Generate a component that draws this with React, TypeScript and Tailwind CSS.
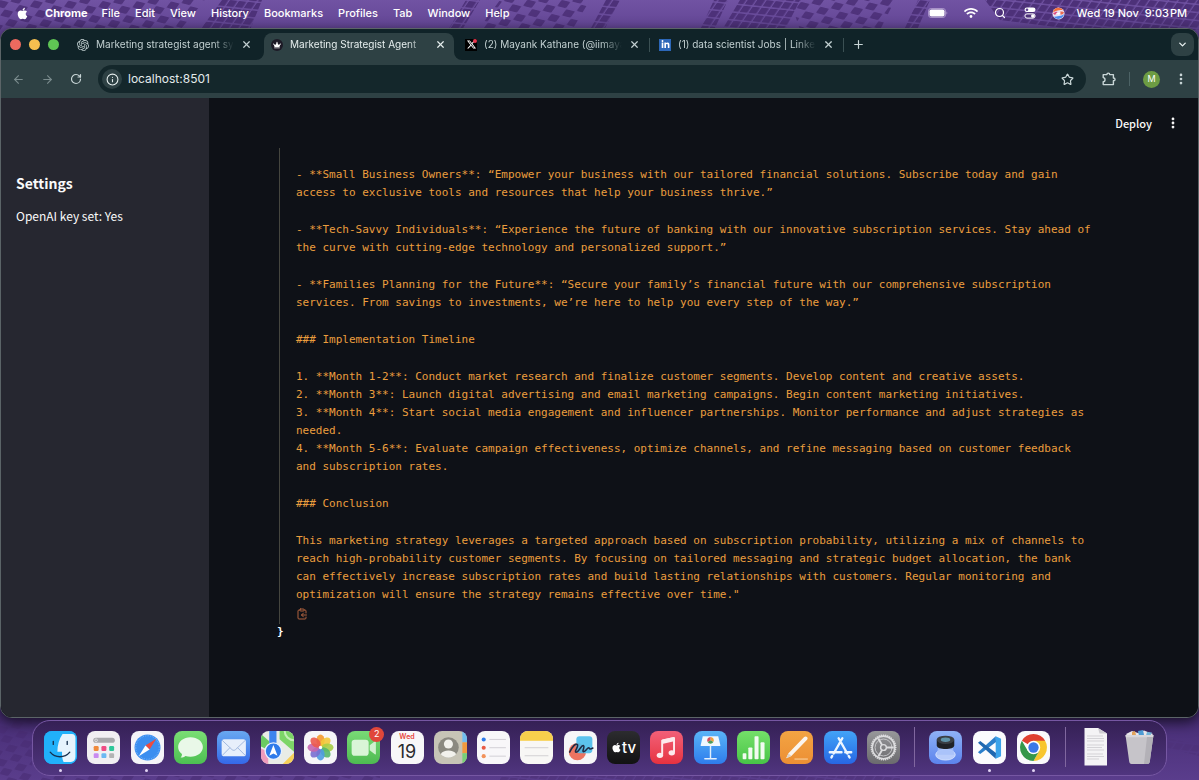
import type { ReactNode } from 'react';
import { FaApple, FaLinkedinIn, FaWifi, FaCrown } from 'react-icons/fa';
import { RiTwitterXFill } from 'react-icons/ri';
import { SiOpenai } from 'react-icons/si';
import {
  ArrowLeft,
  ArrowRight,
  ChevronDown,
  ClipboardCopy,
  EllipsisVertical,
  Info,
  Plus,
  RotateCw,
  Search,
  Star,
  X,
} from 'lucide-react';

const MENUS = ['File', 'Edit', 'View', 'History', 'Bookmarks', 'Profiles', 'Tab', 'Window', 'Help'];

const REPORT: string[][] = [
  [
    '- **Small Business Owners**: “Empower your business with our tailored financial solutions. Subscribe today and gain access to exclusive tools and resources that help your business thrive.”',
  ],
  [
    '- **Tech-Savvy Individuals**: “Experience the future of banking with our innovative subscription services. Stay ahead of the curve with cutting-edge technology and personalized support.”',
  ],
  [
    '- **Families Planning for the Future**: “Secure your family’s financial future with our comprehensive subscription services. From savings to investments, we’re here to help you every step of the way.”',
  ],
  ['### Implementation Timeline'],
  [
    '1. **Month 1-2**: Conduct market research and finalize customer segments. Develop content and creative assets.',
    '2. **Month 3**: Launch digital advertising and email marketing campaigns. Begin content marketing initiatives.',
    '3. **Month 4**: Start social media engagement and influencer partnerships. Monitor performance and adjust strategies as needed.',
    '4. **Month 5-6**: Evaluate campaign effectiveness, optimize channels, and refine messaging based on customer feedback and subscription rates.',
  ],
  ['### Conclusion'],
  [
    'This marketing strategy leverages a targeted approach based on subscription probability, utilizing a mix of channels to reach high-probability customer segments. By focusing on tailored messaging and strategic budget allocation, the bank can effectively increase subscription rates and build lasting relationships with customers. Regular monitoring and optimization will ensure the strategy remains effective over time."',
  ],
];

function Wallpaper() {
  return (
    <svg aria-hidden="true" className="absolute inset-0 h-full w-full" viewBox="0 0 1199 780" preserveAspectRatio="none">
      <defs>
        <linearGradient id="wall" x1="0" y1="0" x2="0" y2="1">
          <stop offset="0" stopColor="#7153a3" />
          <stop offset="0.04" stopColor="#614493" />
          <stop offset="0.9" stopColor="#432a70" />
          <stop offset="1" stopColor="#5a3d8c" />
        </linearGradient>
        <pattern id="chkA" width="20" height="16" patternUnits="userSpaceOnUse" patternTransform="rotate(14) skewX(-22)">
          <rect x="0" y="0" width="9" height="7" rx="1" fill="#482c73" />
          <rect x="10" y="8" width="9" height="7" rx="1" fill="#482c73" />
        </pattern>
        <pattern id="chkB" width="9" height="8" patternUnits="userSpaceOnUse" patternTransform="rotate(6) skewX(-28)">
          <rect width="7.6" height="6.6" rx="0.6" fill="#4d3179" />
        </pattern>
      </defs>
      <rect width="1199" height="780" fill="url(#wall)" />
      <path d="M0 0H205L180 30H0Z M500 0H590L572 30H478Z M790 0H895L880 30H800Z" fill="url(#chkA)" opacity="0.8" />
      <path d="M222 0H262L250 30H200Z M466 0H480L462 30H448Z M606 0H620L604 30H590Z M714 0H728L714 30H700Z M740 0H800L785 30H722Z M918 0H930L917 30H904Z M985 0H1199V30H1080L1000 20Z" fill="url(#chkB)" />
      <path d="M0 718H32V780H0Z M32 776H380V780H32Z" fill="url(#chkA)" opacity="0.6" />
      <path d="M1168 738L1199 745V756L1168 748Z M500 776H900V780H500Z" fill="url(#chkB)" opacity="0.7" />
    </svg>
  );
}

function MenuBar() {
  return (
    <header className="relative flex h-7 shrink-0 items-center pr-3 pb-0.5 pl-4 text-[11px] font-medium text-white">
      <button aria-label="Apple menu" className="mr-4">
        <FaApple size={13} />
      </button>
      <button className="mr-3.5 font-bold">Chrome</button>
      <nav className="flex items-center gap-[15px]">
        {MENUS.map((m) => (
          <button key={m}>{m}</button>
        ))}
      </nav>
      <div className="ml-auto flex items-center gap-4">
        <svg width="20" height="10" viewBox="0 0 20 10" role="img" aria-label="Battery">
          <rect x="0.5" y="0.5" width="17" height="9" rx="2.6" fill="none" stroke="#a892c8" />
          <rect x="1.5" y="1.5" width="15" height="7" rx="1.8" fill="#fff" />
          <path d="M18.6 3.4c.8.3.8 2.9 0 3.2z" fill="#c9bbdd" />
        </svg>
        <FaWifi size={14} />
        <Search size={12} strokeWidth={2.4} />
        <svg width="12" height="12" viewBox="0 0 12 12" role="img" aria-label="Control Centre" className="ml-0.5">
          <rect x="0.5" y="0.5" width="11" height="4.6" rx="2.3" fill="#fff" />
          <circle cx="3" cy="2.8" r="1.3" fill="#5f438f" />
          <rect x="0.9" y="6.9" width="10.2" height="4.2" rx="2.1" fill="none" stroke="#fff" />
          <circle cx="8.8" cy="9" r="1.8" fill="#fff" />
        </svg>
        <svg width="13" height="13" viewBox="0 0 13 13" role="img" aria-label="Siri">
          <circle cx="6.5" cy="6.5" r="6" fill="#ece3f2" />
          <path d="M1 5.5A5.7 5.7 0 0 1 11.5 3.4C8 2.6 4 3.6 1 5.5Z" fill="#f2703c" />
          <path d="M1 6.5C3 5 4.5 4.6 5.5 5L3 8Z" fill="#dc4d83" />
          <path d="M8 4.8C10 4.4 11.4 4.6 12 5.5C11.4 7 10 7.6 8.6 7.8Z" fill="#ea6a50" />
          <path d="M2 9.8C5 9 9 9.5 12 7.2A6 6 0 0 1 2.4 10.6Z" fill="#4c8bee" />
          <path d="M4 6.3L9 5.6L6.5 7.7Z" fill="#fff" />
        </svg>
        <time className="-ml-1 whitespace-pre">Wed 19 Nov  9:03{'\u200A'}PM</time>
      </div>
    </header>
  );
}

function Tab({ icon, title, active, divider }: { icon: ReactNode; title: string; active?: boolean; divider?: boolean }) {
  return (
    <div
      className={
        active
          ? 'relative flex h-full min-w-0 flex-1 items-center gap-[7px] rounded-t-lg bg-[#2e4144] pr-2 pb-1 pl-[7px] text-[#e6eeee]'
          : 'relative flex h-full min-w-0 flex-1 items-center gap-[7px] pr-2 pb-1 pl-[7px] text-[#c2d0d1]'
      }
    >
      <span className="flex size-3 shrink-0 items-center justify-center">{icon}</span>
      <button
        role="tab"
        aria-selected={!!active}
        className="min-w-0 flex-1 overflow-hidden mask-r-from-85% text-left text-[10px] whitespace-nowrap"
      >
        {title}
      </button>
      <button aria-label="Close tab" className="shrink-0">
        <X size={11} strokeWidth={2.6} />
      </button>
      {divider && <span className="absolute -right-0.5 h-3.5 w-px bg-[#3b5053]" />}
      {active && (
        <>
          <svg className="absolute bottom-0 -left-2" width="8" height="8" aria-hidden="true">
            <path d="M8 0V8H0A8 8 0 0 0 8 0Z" fill="#2e4144" />
          </svg>
          <svg className="absolute -right-2 bottom-0" width="8" height="8" aria-hidden="true">
            <path d="M0 0V8H8A8 8 0 0 1 0 0Z" fill="#2e4144" />
          </svg>
        </>
      )}
    </div>
  );
}

function TabStrip() {
  return (
    <div className="flex h-[31px] shrink-0 items-center bg-[#102328] pr-1 pl-[9px]">
      <div className="flex w-[60px] shrink-0 gap-2">
        <button aria-label="Close window" className="size-[11px] rounded-full bg-[#ee6a5f]" />
        <button aria-label="Minimise window" className="size-[11px] rounded-full bg-[#f5bf4f]" />
        <button aria-label="Zoom window" className="size-[11px] rounded-full bg-[#5fc454]" />
      </div>
      <div role="tablist" className="flex h-full max-w-[772px] min-w-0 flex-1 items-center gap-1 pt-1">
        <Tab icon={<SiOpenai size={12} />} title="Marketing strategist agent sy" />
        <Tab
          active
          icon={
            <span className="flex size-3 items-center justify-center rounded-full bg-[#1d1a26] text-white">
              <FaCrown size={8} />
            </span>
          }
          title="Marketing Strategist Agent"
        />
        <Tab
          divider
          icon={
            <span className="relative flex size-3 items-center justify-center bg-black text-white">
              <RiTwitterXFill size={11} />
              <span className="absolute top-0 right-0 size-1 rounded-full bg-[#e5344c]" />
            </span>
          }
          title="(2) Mayank Kathane (@iimaya"
        />
        <Tab
          divider
          icon={
            <span className="flex size-3 items-center justify-center bg-[#2c67b8] text-white">
              <FaLinkedinIn size={9} />
            </span>
          }
          title="(1) data scientist Jobs | Linke"
        />
      </div>
      <button aria-label="New tab" className="ml-2.5 text-[#c9d6d7]">
        <Plus size={13} strokeWidth={2.2} />
      </button>
      <button
        aria-label="Search tabs"
        className="ml-auto flex size-[23px] items-center justify-center rounded-lg bg-[#2e4144] text-[#e6eeee]"
      >
        <ChevronDown size={11} strokeWidth={3} />
      </button>
    </div>
  );
}

function Toolbar() {
  return (
    <div className="flex h-[38px] shrink-0 items-center bg-[#2e4144] pr-2.5 pl-[11px] text-[#c9d6d7]">
      <div className="flex w-[86px] shrink-0 items-center gap-4">
        <button aria-label="Back" className="text-[#7a8b8d]">
          <ArrowLeft size={13} strokeWidth={2} />
        </button>
        <button aria-label="Forward" className="text-[#7a8b8d]">
          <ArrowRight size={13} strokeWidth={2} />
        </button>
        <button aria-label="Reload">
          <RotateCw size={12} strokeWidth={2.4} />
        </button>
      </div>
      <div className="flex h-7 min-w-0 flex-1 items-center rounded-full bg-[#14272b] pr-3 pl-1">
        <button
          aria-label="View site information"
          className="flex size-5 shrink-0 items-center justify-center rounded-full bg-[#2e4144] text-[#e6eeee]"
        >
          <Info size={13} strokeWidth={2} />
        </button>
        <input
          aria-label="Address and search bar"
          defaultValue="localhost:8501"
          className="ml-1.5 min-w-0 flex-1 bg-transparent text-[12px] text-[#e3ebeb] outline-none"
        />
        <button aria-label="Bookmark this tab">
          <Star size={13} strokeWidth={2.2} />
        </button>
      </div>
      <button aria-label="Extensions" className="ml-4">
        <svg width="14" height="14" viewBox="0 0 14 14" fill="none" stroke="currentColor" strokeWidth="1.4" strokeLinejoin="round">
          <path d="M1.2 2.6H4.9C4.9 0.6 7.7 0.6 7.7 2.6H11.4V6C13.6 6 13.6 8.8 11.4 8.8V12.6H1.2V9.7C3.6 9.7 3.6 5.6 1.2 5.6Z" />
        </svg>
      </button>
      <span className="mx-[13px] h-3.5 w-px bg-[#4c6265]" />
      <button
        aria-label="Profile M"
        className="flex size-[17px] items-center justify-center rounded-full bg-[#6d9c43] text-[9px] text-white"
      >
        M
      </button>
      <button aria-label="Chrome menu" className="ml-3.5">
        <EllipsisVertical size={14} strokeWidth={2.6} />
      </button>
    </div>
  );
}

function AppPage() {
  return (
    <div className="flex min-h-0 flex-1 bg-[#0e1117] font-['Noto_Sans_CJK_JP','Noto_Sans',sans-serif] text-[#fafafa]">
      <aside className="w-52 shrink-0 bg-[#262730] px-[15px] pt-[74px]">
        <h2 className="text-[14px] leading-[22px] font-bold">Settings</h2>
        <p className="mt-3 text-[12px] leading-5">OpenAI key set: Yes</p>
      </aside>
      <main className="min-w-0 flex-1">
        <div className="flex h-[50px] items-center justify-end gap-3.5 pr-[18px] text-[11px] font-medium">
          <button>Deploy</button>
          <button aria-label="Main menu">
            <EllipsisVertical size={14} strokeWidth={2.8} />
          </button>
        </div>
        <div className="pr-[104px] pl-[70px] font-['DejaVu_Sans_Mono','Liberation_Mono',monospace] text-[11px] leading-[18px]">
          <div className="flex flex-col border-l border-[#45463f] pt-[18px] pb-1 pl-4 text-[#eb9e3e]">
            <div className="flex flex-col gap-[19px]">
              {REPORT.map((block) => (
                <div key={block[0]}>
                  {block.map((line) => (
                    <p key={line}>{line}</p>
                  ))}
                </div>
              ))}
            </div>
            <button aria-label="Copy to clipboard" className="mt-1 self-start text-[#b0623f]">
              <ClipboardCopy size={12} strokeWidth={2} />
            </button>
          </div>
          <div className="-ml-0.5 leading-4 font-bold text-white">{'}'}</div>
        </div>
      </main>
    </div>
  );
}

function Svg({ children }: { children: ReactNode }) {
  return (
    <svg viewBox="0 0 32 32" className="h-full w-full" aria-hidden="true">
      {children}
    </svg>
  );
}

function DockItem({ label, tile, running, children }: { label: string; tile: string; running?: boolean; children: ReactNode }) {
  return (
    <button aria-label={label} className="relative size-[33px] shrink-0">
      <span className={`block h-full w-full overflow-hidden rounded-lg ${tile}`}>{children}</span>
      {running && <span className="absolute -bottom-2 left-1/2 -ml-0.5 size-[3px] rounded-full bg-[#e2d4f4]" />}
      {label === 'FaceTime' && (
        <span className="absolute -top-1 -right-1 flex size-[15px] items-center justify-center rounded-full bg-[#e0473a] text-[9px] text-white">
          2
        </span>
      )}
    </button>
  );
}

const PETALS = ['#f59a2c', '#f3c93a', '#a9cf46', '#57b76b', '#4f9be0', '#7a6fd0', '#c566ae', '#ec5a4e'];
const PAD_DOTS = ['#f08a3c', '#ef4b84', '#2fc79a', '#c98af0', '#6cb8f2', '#b3b3b3'];
const TEETH = Array.from({ length: 36 }, (_, i) => i * 10);

function Dock() {
  return (
    <footer className="relative mx-8 mt-0.5 mb-1 flex h-14 shrink-0 items-center rounded-[18px] border border-[#7657a3] bg-[#482f72] bg-linear-to-b from-[#352055] to-[#50357f] pr-2.5 pb-0.5 pl-[11px]">
      <div className="flex min-w-0 flex-1 items-center justify-between">
        <DockItem label="Finder" tile="bg-[#1fa2f7]" running>
          <Svg>
            <rect width="32" height="32" fill="#21b1fa" />
            <path d="M18 3H27C29.5 3 30.5 5 30.5 7V25C30.5 28 29 30 26 30H19C17.6 27 17.4 24 17.5 20H13C13 14 14.5 8 18 3Z" fill="#e6f4fd" />
            <path d="M9 10V13M22.5 10V13" stroke="#16304e" strokeWidth="1.3" strokeLinecap="round" />
            <path d="M6 20.5C11 26.5 20 26.5 25 20.5" fill="none" stroke="#16304e" strokeWidth="1.3" strokeLinecap="round" />
          </Svg>
        </DockItem>
        <DockItem label="Apps" tile="bg-[#f1eff2]">
          <Svg>
            <rect x="6" y="6.5" width="21" height="5" rx="2.5" fill="#a9a9ac" />
            <circle cx="8.8" cy="9" r="1.3" fill="none" stroke="#eee" strokeWidth="0.7" />
            {PAD_DOTS.map((c, i) => (
              <rect key={c} x={6.5 + (i % 3) * 7.5} y={i < 3 ? 14.5 : 21.5} width="4.8" height="4.8" rx="1.2" fill={c} />
            ))}
          </Svg>
        </DockItem>
        <DockItem label="Safari" tile="bg-[#f5f4f8]" running>
          <Svg>
            <circle cx="16" cy="16" r="12.6" fill="#3b8ef0" />
            <circle cx="16" cy="16" r="11.4" fill="none" stroke="#8cc2fa" strokeWidth="1" strokeDasharray="0.5 1.2" />
            <path d="M24.5 7.5L18 18L14 14Z" fill="#ee4b3e" />
            <path d="M7.5 24.5L14 14L18 18Z" fill="#fff" />
          </Svg>
        </DockItem>
        <DockItem label="Messages" tile="bg-linear-to-b from-[#7ade74] to-[#4cc052]">
          <Svg>
            <path d="M16 6C22.8 6 28 10.2 28 15.6S22.8 25 16 25C14.2 25 12.6 24.7 11.1 24.2C9.8 25.3 8 25.9 6.4 25.8C7.3 24.9 7.8 23.8 7.7 22.4C5.4 20.7 4 18.3 4 15.6C4 10.2 9.2 6 16 6Z" fill="#e9f8e8" />
          </Svg>
        </DockItem>
        <DockItem label="Mail" tile="bg-linear-to-b from-[#69a8f0] to-[#3568e8]">
          <Svg>
            <rect x="4.5" y="8" width="23.5" height="16.5" rx="2.5" fill="#e7effb" />
            <path d="M5 9L14.5 18C15.6 19 17 19 18 18L27.5 9M5 23.8L12.5 16.2M27.5 23.8L20 16.2" fill="none" stroke="#9cb4dc" strokeWidth="0.9" />
          </Svg>
        </DockItem>
        <DockItem label="Maps" tile="bg-[#e9ece6]">
          <Svg>
            <path d="M18 0H32V20L18 8Z" fill="#7dd567" />
            <path d="M23 0A9 9 0 0 0 32 9" fill="none" stroke="#c5efb6" strokeWidth="2" />
            <path d="M0 3L8 10V19L0 15Z" fill="#6acb63" />
            <path d="M0 17L7 20V32H0Z" fill="#ee9bbc" />
            <path d="M21 32L32 21V32Z" fill="#f7cf58" />
            <path d="M8 0H15V15H8Z" fill="#3d84ee" />
            <circle cx="12" cy="19.5" r="8" fill="#2f7bea" stroke="#e8f1ff" strokeWidth="1.3" />
            <path d="M12 13.5L16 24L12 21.8L8 24Z" fill="#fff" />
          </Svg>
        </DockItem>
        <DockItem label="Photos" tile="bg-[#f6f5f8]">
          <Svg>
            {PETALS.map((c, i) => (
              <ellipse key={c} cx="16" cy="9.2" rx="4" ry="5.8" fill={c} fillOpacity="0.9" transform={`rotate(${i * 45} 16 16)`} />
            ))}
            <circle cx="16" cy="16" r="1.6" fill="#fff" />
          </Svg>
        </DockItem>
        <DockItem label="FaceTime" tile="bg-linear-to-b from-[#79da76] to-[#4dbb51]">
          <Svg>
            <rect x="4.5" y="8.5" width="16.5" height="15.5" rx="3" fill="#d9f5d7" />
            <path d="M22 13.8L27 10C27.6 9.6 28 9.8 28 10.5V22C28 22.7 27.6 23 27 22.5L22 18.6Z" fill="#d0f0ce" />
          </Svg>
        </DockItem>
        <DockItem label="Calendar" tile="bg-[#f8f7f9]">
          <span className="flex h-full flex-col items-center justify-center">
            <span className="text-[7px] leading-[9px] font-semibold text-[#e8453a]">Wed</span>
            <span className="text-[18px] leading-[22px] text-[#2b2b2e]">19</span>
          </span>
        </DockItem>
        <DockItem label="Contacts" tile="bg-[#c7c4b6]">
          <Svg>
            <rect x="27.5" width="4.5" height="11" fill="#70bdf0" />
            <rect x="27.5" y="11" width="4.5" height="10.5" fill="#f29a3f" />
            <rect x="27.5" y="21.5" width="4.5" height="10.5" fill="#79cf78" />
            <circle cx="14" cy="16" r="10" fill="#8b8980" />
            <circle cx="14" cy="12.6" r="4.4" fill="#f2f1ec" />
            <path d="M6.5 22.6C8.6 17.8 19.4 17.8 21.5 22.6A10 10 0 0 1 6.5 22.6Z" fill="#f2f1ec" />
          </Svg>
        </DockItem>
        <DockItem label="Reminders" tile="bg-[#f8f7f9]">
          <Svg>
            <path d="M12 8.2H28M12 16.2H28M12 24.4H28" stroke="#cfcdd3" strokeWidth="0.9" />
            <circle cx="6.5" cy="8.2" r="2" fill="#2d7bea" />
            <circle cx="6.5" cy="16.2" r="2" fill="#e95b45" />
            <circle cx="6.5" cy="24.4" r="2" fill="#f2925b" />
          </Svg>
        </DockItem>
        <DockItem label="Notes" tile="bg-[#f8f7f5]">
          <Svg>
            <rect width="32" height="9.5" fill="#f8cf4c" />
            <path d="M4.5 16.2H27.5M4.5 24H27.5" stroke="#cfcdd0" strokeWidth="0.9" />
          </Svg>
        </DockItem>
        <DockItem label="Freeform" tile="bg-[#f6f6f8]">
          <Svg>
            <circle cx="13" cy="20" r="8.4" fill="#ec7461" />
            <rect x="12" y="5" width="15.5" height="16.5" rx="3" fill="#4bbdeb" fillOpacity="0.9" />
            <path d="M5.5 20.5C8 15 11.5 11.5 13 13.2C14.5 15 9.5 20 11.6 20.6C14 21 17 13 19 14.2C20.6 15.4 17 19.7 19 20C21 20.2 22.5 16 24 16.2C25 16.5 24 18.6 28 16.5" fill="none" stroke="#1f2a44" strokeWidth="1.5" strokeLinecap="round" />
          </Svg>
        </DockItem>
        <DockItem label="TV" tile="bg-linear-to-b from-[#2c2c2f] to-[#121213]">
          <span className="flex h-full items-center justify-center text-white">
            <FaApple size={11} />
            <span className="text-[15px] leading-none font-medium">tv</span>
          </span>
        </DockItem>
        <DockItem label="Music" tile="bg-linear-to-b from-[#f25f78] to-[#e6313f]">
          <Svg>
            <path d="M11.8 23V9.3L23.3 6.8V20.6" fill="none" stroke="#fdeaec" strokeWidth="1.9" strokeLinejoin="round" />
            <path d="M11.8 8.3L23.3 5.8V10L11.8 12.5Z" fill="#fdeaec" />
            <ellipse cx="9.6" cy="23.6" rx="3.1" ry="2.5" fill="#fdeaec" />
            <ellipse cx="21.1" cy="21.2" rx="3.1" ry="2.5" fill="#fdeaec" />
          </Svg>
        </DockItem>
        <DockItem label="Keynote" tile="bg-linear-to-b from-[#5ab4f7] to-[#2f7cec]">
          <Svg>
            <path d="M8.5 5H23.5L25.5 13.5V14.5H6.5V13.5Z" fill="#f0f7fe" />
            <path d="M16 14.5V27M10.5 27H21.5" stroke="#e3effc" strokeWidth="1.4" strokeLinecap="round" />
            <path d="M16 9V5.8A3.2 3.2 0 0 1 18.8 10.6Z" fill="#f0a03c" />
            <path d="M16 9L18.8 10.6A3.2 3.2 0 0 1 13.2 10.6Z" fill="#4a9c5b" />
            <path d="M16 9L13.2 10.6A3.2 3.2 0 0 1 16 5.8Z" fill="#d84f5c" />
          </Svg>
        </DockItem>
        <DockItem label="Numbers" tile="bg-linear-to-b from-[#74e069] to-[#47c447]">
          <Svg>
            <rect x="5.5" y="21.5" width="3.6" height="6" rx="0.8" fill="#f1fbf0" />
            <rect x="11" y="16" width="3.9" height="11.5" rx="0.8" fill="#f1fbf0" />
            <rect x="17" y="5" width="3.9" height="22.5" rx="0.8" fill="#f1fbf0" />
            <rect x="22.8" y="11" width="3.9" height="16.5" rx="0.8" fill="#f1fbf0" />
          </Svg>
        </DockItem>
        <DockItem label="Pages" tile="bg-linear-to-b from-[#f3a443] to-[#ec8f34]">
          <Svg>
            <path d="M6 26.5L8.2 21.5L23.2 6C24.2 5 25.4 5 26.2 5.8C27 6.6 27 7.8 26 8.8L11 24.2Z" fill="#fbf5ee" />
            <path d="M8.2 21.5L11 24.2L6 26.5Z" fill="#ddd3c8" />
            <path d="M14 27.2H27" stroke="#fbdcb4" strokeWidth="0.9" />
          </Svg>
        </DockItem>
        <DockItem label="App Store" tile="bg-linear-to-b from-[#43a3f7] to-[#2866e4]">
          <Svg>
            <path d="M17.8 7L9.4 21.8M14.2 7L22.6 21.8M8 24.2L7.2 25.6M23.9 24.2L24.8 25.6M5.6 20.6H17M20.6 20.6H26.4" fill="none" stroke="#eef6ff" strokeWidth="2.3" strokeLinecap="round" />
          </Svg>
        </DockItem>
        <DockItem label="System Settings" tile="bg-linear-to-b from-[#97979a] to-[#6b6b6e]">
          <Svg>
            <circle cx="16" cy="16" r="11" fill="none" stroke="#dcdcde" strokeWidth="1.6" />
            {TEETH.map((a) => (
              <path key={a} d="M16 3.4V5" stroke="#dcdcde" strokeWidth="1.2" transform={`rotate(${a} 16 16)`} />
            ))}
            <circle cx="16" cy="16" r="8.2" fill="none" stroke="#c9c9cc" strokeWidth="0.9" />
            <circle cx="16" cy="16" r="2.8" fill="none" stroke="#dcdcde" strokeWidth="1.4" />
            <path d="M18.8 16H26M14.6 13.6L11 7.3M14.6 18.4L11 24.7" stroke="#dcdcde" strokeWidth="1.8" />
          </Svg>
        </DockItem>
      </div>
      <span className="mr-3.5 ml-[14px] h-10 w-px bg-[#80679f]" />
      <div className="flex items-center gap-[11px]">
        <DockItem label="Disk Utility" tile="bg-linear-to-b from-[#8fb2f6] to-[#5c83ec]">
          <Svg>
            <ellipse cx="16" cy="23" rx="9.5" ry="5.2" fill="#b9cdfb" stroke="#dbe7ff" strokeWidth="0.8" />
            <path d="M9 15H23L24.5 23H7.5Z" fill="#a6c0fa" fillOpacity="0.8" />
            <path d="M7.5 8.5V14C7.5 18.6 24.5 18.6 24.5 14V8.5Z" fill="#202226" />
            <ellipse cx="16" cy="8.5" rx="8.5" ry="4" fill="#3b3f45" />
            <ellipse cx="16" cy="8.5" rx="4.6" ry="2.1" fill="#5f93a8" />
          </Svg>
        </DockItem>
        <DockItem label="Visual Studio Code" tile="bg-[#fbfbfd]" running>
          <Svg>
            <path d="M22 5.2L27.2 7.6V24.4L22 26.8Z" fill="#3ba3ea" />
            <path d="M22.3 10.6L7 22.4L4.8 20.6L22 5.2Z" fill="#2b7fcb" />
            <path d="M22.3 21.4L7 9.6L4.8 11.4L22 26.8Z" fill="#2068b0" />
          </Svg>
        </DockItem>
        <DockItem label="Google Chrome" tile="bg-[#fafafb]" running>
          <Svg>
            <path d="M16 16L4.74 9.5A13 13 0 0 1 27.26 9.5Z" fill="#e0402f" />
            <path d="M16 9.5H27.26A13 13 0 0 1 16 29L21.6 19.2Z" fill="#f8c62f" />
            <path d="M4.74 9.5L10.4 19.2L16 22.4L21.6 19.2L16 29A13 13 0 0 1 4.74 9.5Z" fill="#35974a" />
            <circle cx="16" cy="16" r="6.5" fill="#fff" />
            <circle cx="16" cy="16" r="5" fill="#3b78e7" />
          </Svg>
        </DockItem>
      </div>
      <span className="mr-[13px] ml-[15px] h-10 w-px bg-[#80679f]" />
      <div className="flex items-center gap-[11px]">
        <button aria-label="Document" className="h-10 w-[33px]">
          <svg viewBox="0 0 33 40" className="h-full w-full" aria-hidden="true">
            <path d="M5.5 1H19L28 6.5V38.5H5.5Z" fill="#f4f3f5" />
            <path d="M19 1L20.5 6.5H28Z" fill="#cfcdd2" />
            <path d="M8 9H24M8 11.5H25M8 14H25M8 18H25M8 20.5H23M8 23H25M8 27H24M8 29.5H25M8 32H20" stroke="#c6c4ca" strokeWidth="0.7" />
          </svg>
        </button>
        <button aria-label="Bin" className="h-10 w-[33px]">
          <svg viewBox="0 0 33 40" className="h-full w-full" aria-hidden="true">
            <path d="M3 7L9 4L15 6L21 3.5L30 7L27 11H6Z" fill="#e8e6ea" />
            <path d="M15 4L20 3L21 8L16 9Z" fill="#4d9bd4" />
            <path d="M24 5L29 5.5L27 9L23 8.5Z" fill="#73b3d8" />
            <path d="M9 5L12 4L13 8L9 9Z" fill="#e2a25a" />
            <path d="M2.5 8H30.5L26.8 34.5C26.6 36 25.8 37 24.5 37H8.5C7.2 37 6.4 36 6.2 34.5Z" fill="#c6c4c9" />
            <path d="M2.5 8H30.5L30.2 10.2H2.8Z" fill="#d9d7dc" />
            <path d="M24 10H30.2L26.8 34.5C26.6 36 25.8 37 24.5 37H21Z" fill="#b3b1b7" />
          </svg>
        </button>
      </div>
    </footer>
  );
}

export default function App() {
  return (
    <div className="relative flex h-screen flex-col overflow-hidden bg-[#4d3380] font-['Inter','Liberation_Sans',sans-serif]">
      <Wallpaper />
      <MenuBar />
      <section
        aria-label="Chrome window"
        className="relative flex min-h-0 flex-1 flex-col overflow-hidden rounded-xl border border-[#5b6467] bg-[#0e1117] shadow-[0_4px_14px_rgba(0,0,0,0.7)]"
      >
        <TabStrip />
        <Toolbar />
        <AppPage />
      </section>
      <Dock />
    </div>
  );
}
